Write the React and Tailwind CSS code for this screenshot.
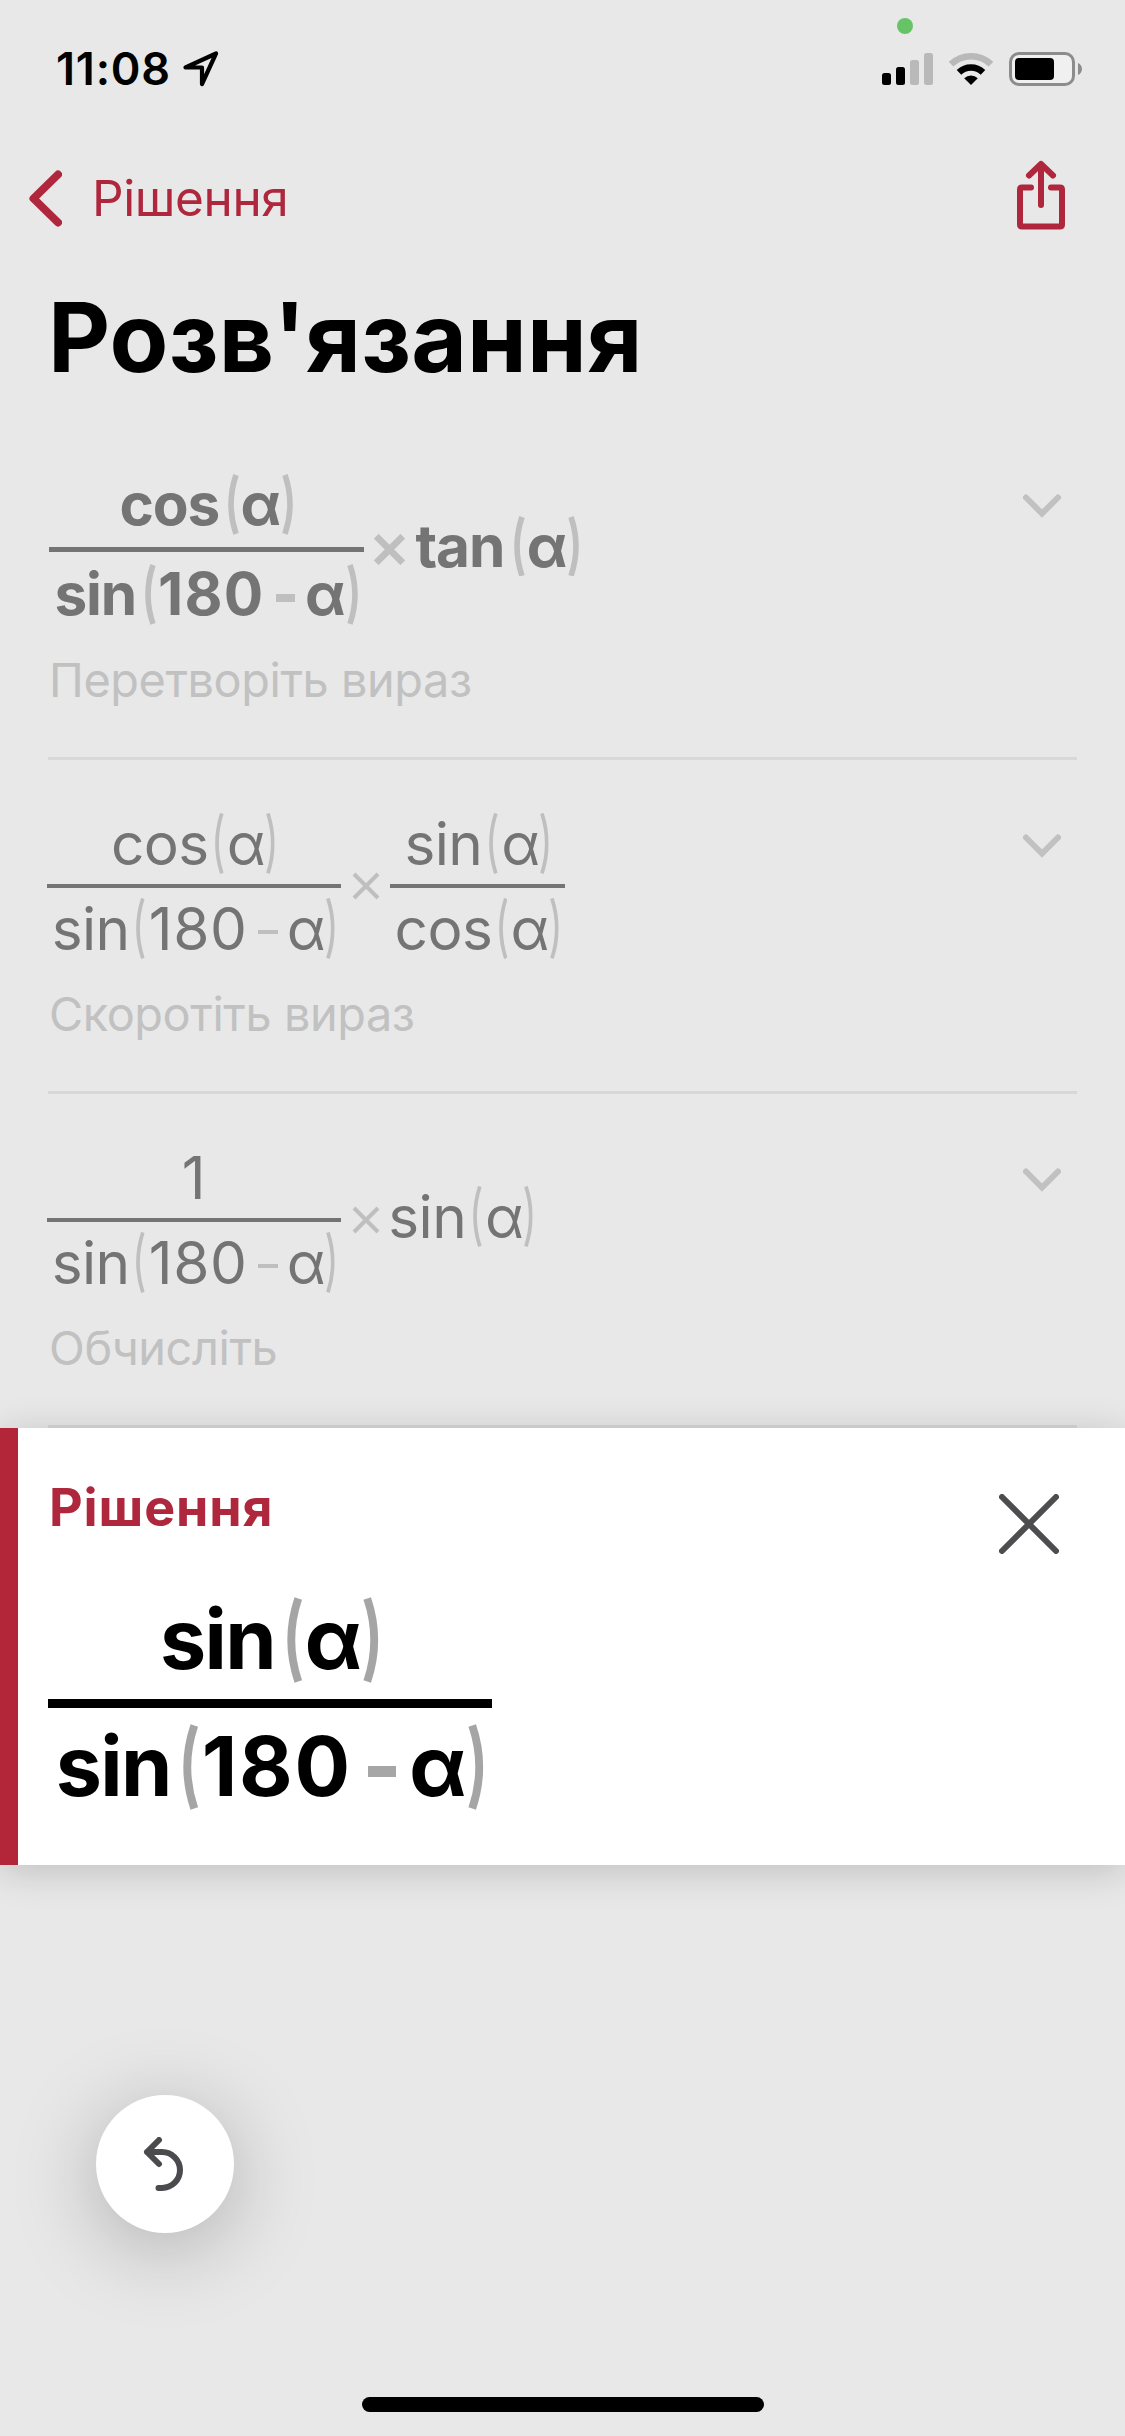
import { clsx } from 'clsx';

const Paren = ({ bold, right }) => (
  <svg
    viewBox={bold ? '0 0 11 61' : '0 0 9 61'}
    fill="none"
    stroke="currentColor"
    strokeWidth={bold ? 5.6 : 3.8}
    className={clsx(
      'h-[1.04em] shrink-0 opacity-35',
      bold ? 'w-[0.188em]' : 'w-[0.15em]',
      right && '-scale-x-100',
      right && (bold ? 'mr-[0.11em] ml-[0.06em]' : 'mr-[0.12em] ml-[0.06em]'),
      !right && (bold ? 'mr-[0.07em] ml-[0.18em]' : 'mr-[0.11em] ml-[0.19em]')
    )}
    preserveAspectRatio="none"
  >
    <path d={bold ? 'M8 1C1.6 20 1.6 41 8 60' : 'M7 .5C.6 20 .6 41 7 60.5'} />
  </svg>
);

// Fixed-width token so every operand keeps its own slot in the expression
const Word = ({ className, children }) => (
  <span className={clsx('flex shrink-0 justify-center whitespace-nowrap', className)}>{children}</span>
);

const Alpha = ({ bold }) => <Word className={bold ? 'w-[0.605em]' : 'w-[0.55em]'}>α</Word>;

const widths = {
  sin: { bold: 'w-[1.33em] tracking-[-0.02em]', regular: 'w-[1.19em] tracking-[-0.01em]' },
  cos: { bold: 'w-[1.65em] tracking-[-0.02em]', regular: 'w-[1.51em] tracking-[-0.01em]' },
  tan: { bold: 'w-[1.5em] tracking-[-0.02em]', regular: 'w-[1.4em] tracking-[-0.01em]' },
};

const Minus = ({ bold }) => (
  <span
    className={clsx(
      'mr-[0.21em] ml-[0.225em] shrink-0 self-center bg-current opacity-35',
      bold ? 'mt-[0.12em] h-[0.135em] w-[0.335em]' : 'mt-[0.12em] h-[0.08em] w-[0.34em]'
    )}
  />
);

const Fn = ({ name, bold, minus, className }) => (
  <div className={clsx('flex h-[1.04em]', bold ? 'leading-[1.04em]' : 'leading-[1.06em]', className)}>
    <Word className={bold ? widths[name].bold : widths[name].regular}>{name}</Word>
    <Paren bold={bold} />
    {minus && (
      <>
        <Word className={bold ? 'w-[1.76em] tracking-[0.02em]' : 'w-[1.59em] tracking-[0.01em]'}>180</Word>
        <Minus bold={bold} />
      </>
    )}
    <Alpha bold={bold} />
    <Paren bold={bold} right />
  </div>
);

const Fraction = ({ top, bottom, bold }) => (
  <div className="flex flex-col items-center">
    <div className={bold ? 'pl-[0.125em]' : 'pl-[0.15em]'}>{top}</div>
    <div className={clsx('w-full bg-current', bold ? 'my-[0.2em] h-[0.1em]' : 'my-[10px] h-[4px]')} />
    <div className={bold ? 'pl-[0.125em]' : 'pl-[0.15em]'}>{bottom}</div>
  </div>
);

const Times = ({ bold }) => (
  <svg
    viewBox="0 0 28 28"
    stroke="currentColor"
    strokeWidth={bold ? 6 : 4}
    className={clsx('shrink-0 opacity-35', bold ? 'mr-[11px] ml-2.5 size-[31px]' : 'mr-2.5 ml-[11px] size-7')}
  >
    <path d="M2 2 26 26M26 2 2 26" />
  </svg>
);

const Step = ({ label, bold, children }) => (
  <li className="flex h-[334px] flex-col justify-end border-b-3 border-[#d8d8d8] pb-[47px]">
    <div className="flex items-start justify-between">
      <div
        className={clsx(
          'flex items-center text-[58.5px] text-[#747474]',
          bold ? 'ml-px font-bold' : '-ml-px font-normal'
        )}
      >
        {children}
      </div>
      <svg
        viewBox="0 0 38 24"
        fill="none"
        stroke="#c1c1c1"
        strokeWidth="6"
        strokeLinecap="round"
        className={clsx('mr-4 h-6 w-[38px]', bold ? 'mt-5' : 'mt-[21px]')}
      >
        <path d="M3 3.5 19 19.5 35 3.5" />
      </svg>
    </div>
    <p className="mt-[25px] ml-px text-[46.8px] leading-[60px] tracking-[-0.4px] text-[#c1c1c1]">{label}</p>
  </li>
);

const StatusBar = () => (
  <header className="flex h-[140px] items-start justify-between pt-10 pr-[42px] pl-[56px]">
    <div className="flex items-center pt-px">
      <span className="text-[45px] leading-[56px] font-semibold tracking-[0.8px]">11:08</span>
      <svg
        viewBox="0 0 36 36"
        fill="none"
        stroke="#000"
        strokeWidth="4.2"
        strokeLinejoin="round"
        className="ml-3 size-9"
      >
        <path d="M2.5 16.5 33 2.5 19 33V16.5z" />
      </svg>
    </div>
    <div className="flex items-start pt-3">
      <svg viewBox="0 0 51 33" className="mt-px h-[33px] w-[51px]">
        <rect y="20" width="9" height="12" rx="2.5" />
        <rect x="14" y="14" width="9" height="18" rx="2.5" />
        <rect x="28" y="7" width="9" height="25" rx="2.5" fill="#b9b9b9" />
        <rect x="42" width="9" height="32" rx="2.5" fill="#b9b9b9" />
      </svg>
      <svg viewBox="0 0 46 34" fill="none" className="ml-[15px] h-[34px] w-[46px]">
        <path d="M3 12.2A29 29 0 0 1 43 12.2" stroke="#b9b9b9" strokeWidth="6.6" />
        <path d="M11 20.3A17.5 17.5 0 0 1 35 20.3" stroke="#000" strokeWidth="6.6" />
        <path d="M23 33 16.2 26.2A10 10 0 0 1 29.8 26.2z" fill="#000" />
      </svg>
      <svg viewBox="0 0 74 34" className="ml-[15px] h-[34px] w-[74px]">
        <rect x="1.5" y="1.5" width="63" height="31" rx="8.5" fill="#f0f0f0" stroke="#8c8c8c" strokeWidth="3" />
        <rect x="6" y="6" width="39" height="22" rx="4" />
        <path d="M69 11c5.3 2.2 5.3 10 0 12z" fill="#8c8c8c" />
      </svg>
    </div>
  </header>
);

export default function App() {
  return (
    <div className="relative flex h-[2436px] w-[1125px] flex-col overflow-hidden bg-[#e8e8e8] font-['Inter','Noto_Sans',sans-serif] text-black">
      <StatusBar />
      <span className="absolute top-[18px] left-[897px] size-4 rounded-full bg-[#67c466]" />

      <nav className="flex h-[116px] items-center justify-between pr-[60px] pl-[29px] text-[#af273c]">
        <button className="flex items-center">
          <svg
            viewBox="0 0 33 57"
            fill="none"
            stroke="currentColor"
            strokeWidth="8"
            strokeLinecap="round"
            strokeLinejoin="round"
            className="h-[57px] w-[33px]"
          >
            <path d="M29 4.5 4.5 28.5 29 52.5" />
          </svg>
          <span className="ml-[30px] text-[49.5px] leading-[60px] tracking-[-0.4px]">Рішення</span>
        </button>
        <svg
          viewBox="0 0 48 70"
          fill="none"
          stroke="currentColor"
          strokeWidth="6"
          strokeLinecap="round"
          strokeLinejoin="round"
          className="-mt-1.5 h-[70px] w-12"
        >
          <path d="M14 27.5H5Q3 27.5 3 29.5V64.500Q3 66.500 5 66.500H43Q45 66.500 45 64.500V29.500Q45 27.500 43 27.500H34M24 45V4M12 15.5 24 4 36 15.5" />
        </svg>
      </nav>

      <h1 className="mt-[21px] h-[120px] pl-12 text-[96px] leading-[120px] font-bold tracking-[0.2px]">
        Розв'язання
      </h1>

      <ol className="mt-[29px] px-12">
        <Step label="Перетворіть вираз" bold>
          <Fraction bold top={<Fn bold name="cos" />} bottom={<Fn bold name="sin" minus />} />
          <Times bold />
          <Fn bold name="tan" className="mb-[7px]" />
        </Step>
        <Step label="Скоротіть вираз">
          <Fraction top={<Fn name="cos" />} bottom={<Fn name="sin" minus />} />
          <Times />
          <Fraction top={<Fn name="sin" />} bottom={<Fn name="cos" />} />
        </Step>
        <Step label="Обчисліть">
          <Fraction
            top={<div className="mr-[0.17em] h-[1.04em] leading-[1.06em]">1</div>}
            bottom={<Fn name="sin" minus />}
          />
          <Times />
          <Fn name="sin" className="mb-[7px] ml-0.5" />
        </Step>
      </ol>

      <section className="relative flex h-[437px] shrink-0 items-start justify-between border-l-18 border-[#b3263a] bg-white pr-[66px] pl-[30px] shadow-[0_6px_36px_rgba(0,0,0,0.18)]">
        <div>
          <h2 className="mt-[47px] ml-px text-[52px] leading-[66px] font-bold tracking-[0.9px] text-[#af273c]">
            Рішення
          </h2>
          <div className="mt-[56px] flex text-[82.5px] font-bold">
            <Fraction bold top={<Fn bold name="sin" />} bottom={<Fn bold name="sin" minus />} />
          </div>
        </div>
        <svg
          viewBox="0 0 60 60"
          stroke="#4d4d50"
          strokeWidth="6"
          strokeLinecap="round"
          className="mt-[66px] size-[60px]"
        >
          <path d="M3 3 57 57M57 3 3 57" />
        </svg>
      </section>

      <footer className="flex grow flex-col justify-between px-24 pt-[230px] pb-6">
        <button className="flex size-[138px] items-center justify-center rounded-full bg-white shadow-[0_14px_84px_rgba(0,0,0,0.25)]">
          <svg
            viewBox="0 0 40 54"
            fill="none"
            stroke="#4a4a4f"
            strokeWidth="6"
            strokeLinecap="round"
            strokeLinejoin="round"
            className="-ml-1 h-[54px] w-10"
          >
            <path d="M16 3 4 15 16 27M4 15H19A18 18 0 0 1 19 51H15.5" />
          </svg>
        </button>
        <div className="h-[15px] w-[402px] self-center rounded-full bg-black" />
      </footer>
    </div>
  );
}
